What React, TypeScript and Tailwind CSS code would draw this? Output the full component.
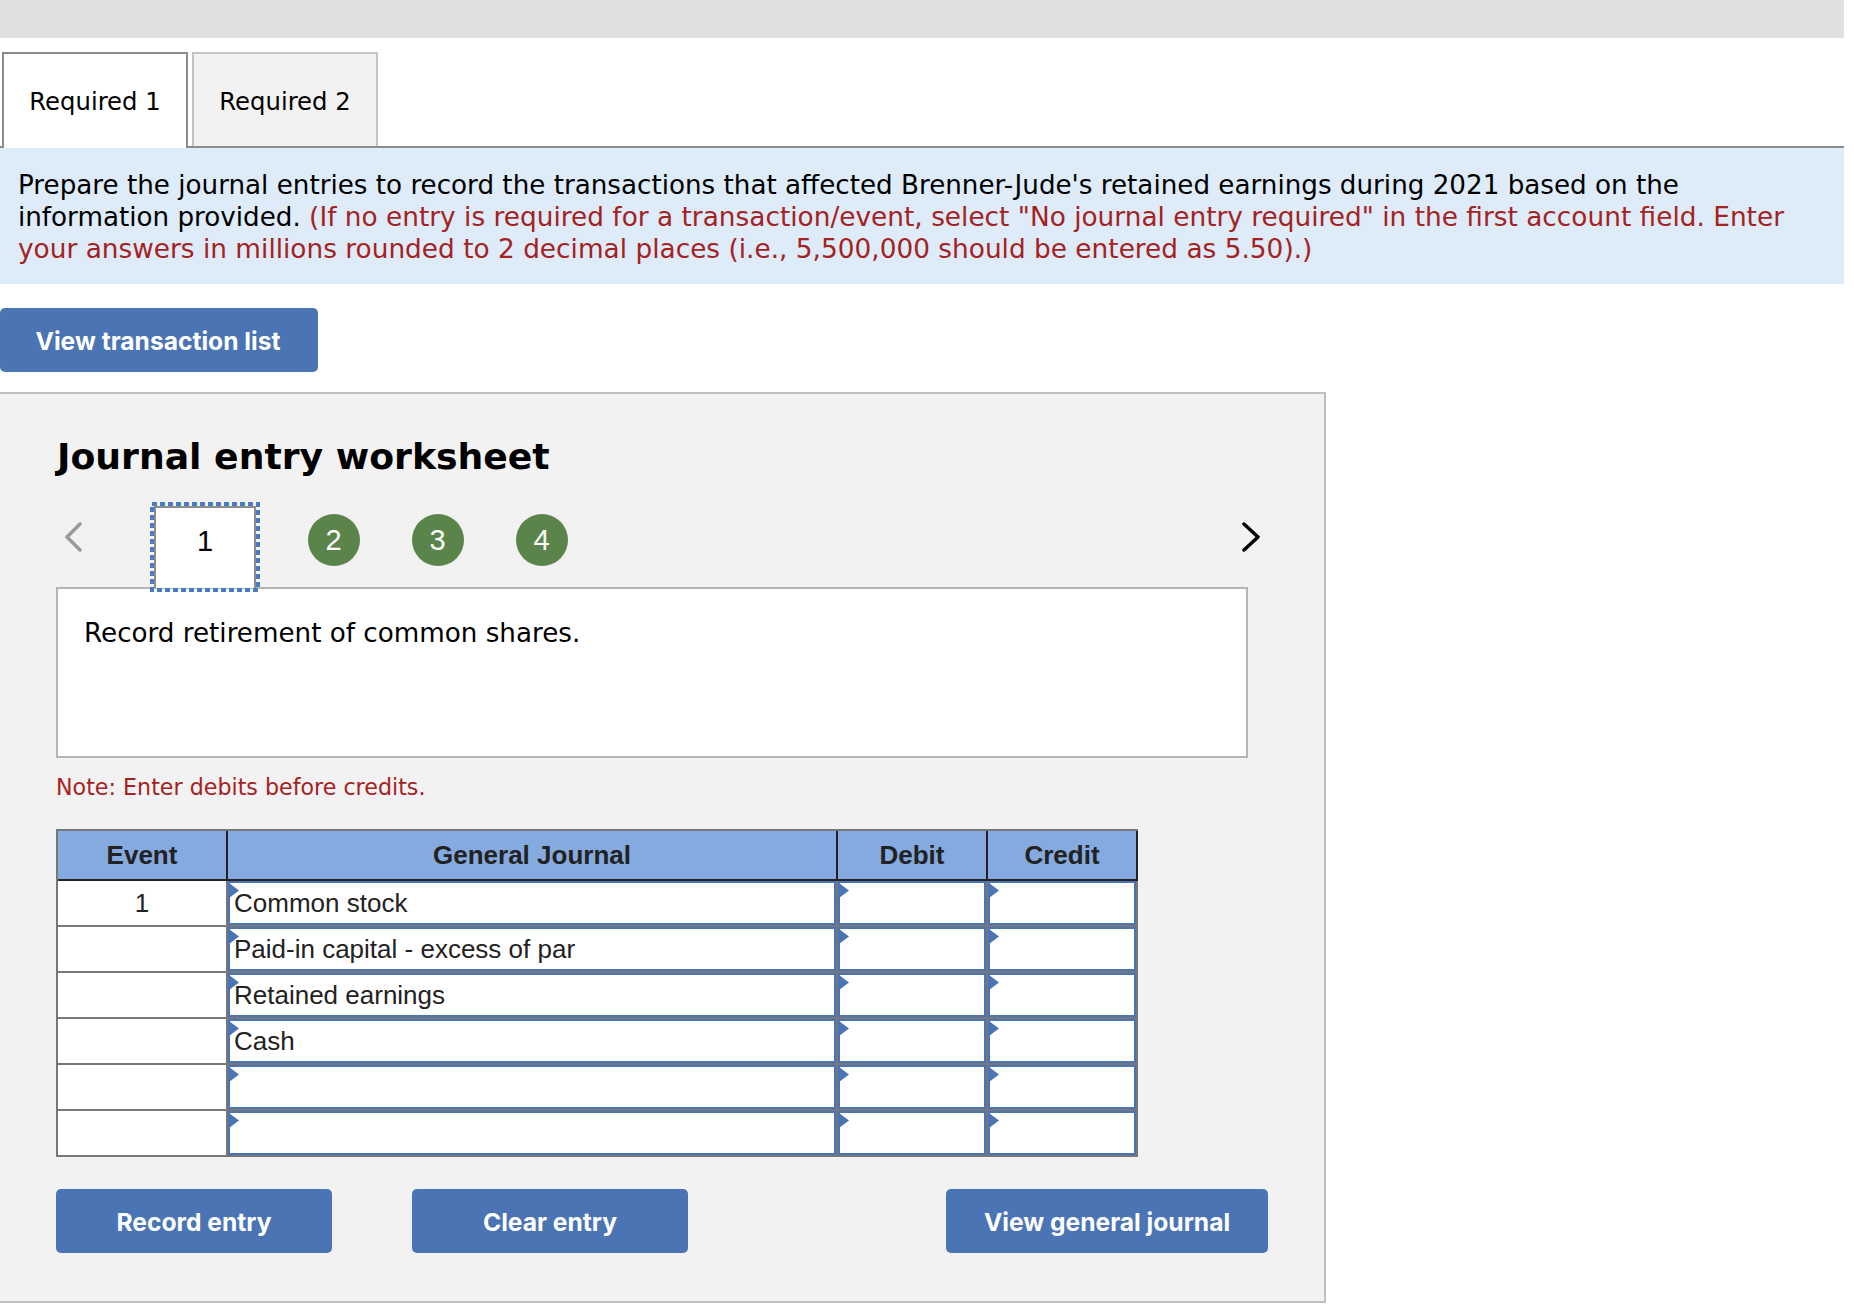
const btn = "h-[64px] bg-[#4a74b4] rounded-[5px] text-white font-bold text-[24.6px] font-['Inter',sans-serif] flex items-center justify-center pt-[2px]";
const rows = ["Common stock", "Paid-in capital - excess of par", "Retained earnings", "Cash", "", ""];

function Flag() {
  return (
    <svg className="absolute left-[1px] top-[2px]" width="10" height="15" viewBox="0 0 10 15">
      <path d="M0 0L10 7.5L0 15Z" fill="#4a74b4" />
    </svg>
  );
}

function Cell({ text }: { text?: string }) {
  return (
    <div className="relative h-[44px] border-l-2 border-[#777]">
      <div className="h-[44px] border-2 border-[#4a74b4] bg-white pl-[4px] flex items-center text-[26px] text-[#222] font-['Liberation_Sans',sans-serif]">
        {text}
      </div>
      <Flag />
    </div>
  );
}

export default function App() {
  return (
    <div className="min-h-[1312px] bg-white font-['DejaVu_Sans',sans-serif] text-[26.2px] text-black">
      <div className="h-[38px] w-[1844px] bg-[#e0e0e0]" />
      <div className="mt-[14px] w-[1844px] h-[96px] pl-[2px] flex gap-[4px] border-b-2 border-[#8c8c8c]">
        <div className="w-[186px] h-[96px] border-2 border-b-0 border-[#8c8c8c] bg-white flex items-center justify-center text-[24.3px] pt-[2px]">Required 1</div>
        <div className="w-[186px] h-[94px] border-2 border-b-0 border-[#c4c4c4] bg-[#f2f2f2] flex items-center justify-center text-[24.3px] pt-[4px]">Required 2</div>
      </div>
      <div className="w-[1844px] h-[136px] bg-[#deebf8] px-[18px] pt-[21px] leading-[32px]">
        Prepare the journal entries to record the transactions that affected Brenner-Jude's retained earnings during 2021 based on the
        <br />
        information provided.{" "}
        <span className="text-[#a52222] text-[26.37px]">
          (If no entry is required for a transaction/event, select "No journal entry required" in the first account field. Enter
          <br />
          your answers in millions rounded to 2 decimal places (i.e., 5,500,000 should be entered as 5.50).)
        </span>
      </div>
      <div className={btn + " mt-[24px] w-[318px] pr-[2px]"}>View transaction list</div>
      <div className="mt-[20px] w-[1326px] h-[911px] bg-[#f2f2f2] border-2 border-l-0 border-[#c0c0c0] pl-[56px]">
        <h1 className="mt-[40px] ml-[1px] text-[36.2px] leading-[46px] font-bold">Journal entry worksheet</h1>
        <div className="mt-[22px] h-[90px] flex items-start relative z-10 w-[1204px]">
          <svg className="mt-[20px] ml-[8px]" width="18" height="30" viewBox="0 0 18 30" fill="none"><path d="M16 2L3 15L16 28" stroke="#999" strokeWidth="3.5" strokeLinecap="round" strokeLinejoin="round" /></svg>
          <div className="relative ml-[68px] w-[110px] h-[90px] p-[4px]">
            <svg className="absolute inset-0" width="110" height="90" viewBox="0 0 110 90" fill="none"><rect x="2" y="2" width="106" height="86" stroke="#4a7cc4" strokeWidth="4" strokeDasharray="5 3" /></svg>
            <div className="relative h-[82px] border-2 border-b-0 border-[#8c8c8c] bg-white flex items-center justify-center pb-[12px] font-['Liberation_Sans',sans-serif] text-[29px]">1</div>
          </div>
          <div className="ml-[48px] mt-[12px] flex gap-[52px]">
            {["2", "3", "4"].map((n) => (
              <div key={n} className="w-[52px] h-[52px] rounded-full bg-[#5a8449] text-white flex items-center justify-center pt-[2px] pr-[1px] font-['Liberation_Sans',sans-serif] text-[29px]">{n}</div>
            ))}
          </div>
          <svg className="mt-[20px] ml-auto" width="18" height="30" viewBox="0 0 18 30" fill="none"><path d="M2 2L16 15L2 28" stroke="#000" strokeWidth="3.5" strokeLinecap="round" strokeLinejoin="round" /></svg>
        </div>
        <div className="-mt-[5px] w-[1192px] h-[171px] border-2 border-[#b5b5b5] bg-white pl-[26px] pt-[28px] leading-[32px]">Record retirement of common shares.</div>
        <div className="mt-[15px] text-[#a52222] text-[22.2px] leading-[28px]">Note: Enter debits before credits.</div>
        <div className="mt-[28px] w-[1082px] font-['Liberation_Sans',sans-serif] border-l-2 border-t-2 border-[#777]">
          <div className="grid grid-cols-[168px_610px_150px_150px] h-[50px] bg-[#84aae0] text-[#222] font-bold text-[26px] border-b-2 border-r-2 border-[#222]">
            <div className="flex items-center justify-center">Event</div>
            <div className="flex items-center justify-center border-l-2 border-[#222]">General Journal</div>
            <div className="flex items-center justify-center border-l-2 border-[#222]">Debit</div>
            <div className="flex items-center justify-center border-l-2 border-[#222]">Credit</div>
          </div>
          {rows.map((r, i) => (
            <div key={i} className="grid grid-cols-[168px_610px_150px_150px] h-[46px] bg-white border-b-2 border-r-2 border-[#777]">
              <div className="flex items-center justify-center text-[26px] text-[#222]">{i === 0 ? "1" : ""}</div>
              <Cell text={r} />
              <Cell />
              <Cell />
            </div>
          ))}
        </div>
        <div className="mt-[32px] w-[1212px] flex">
          <div className={btn + " w-[276px]"}>Record entry</div>
          <div className={btn + " w-[276px] ml-[80px]"}>Clear entry</div>
          <div className={btn + " w-[322px] ml-auto"}>View general journal</div>
        </div>
      </div>
    </div>
  );
}
